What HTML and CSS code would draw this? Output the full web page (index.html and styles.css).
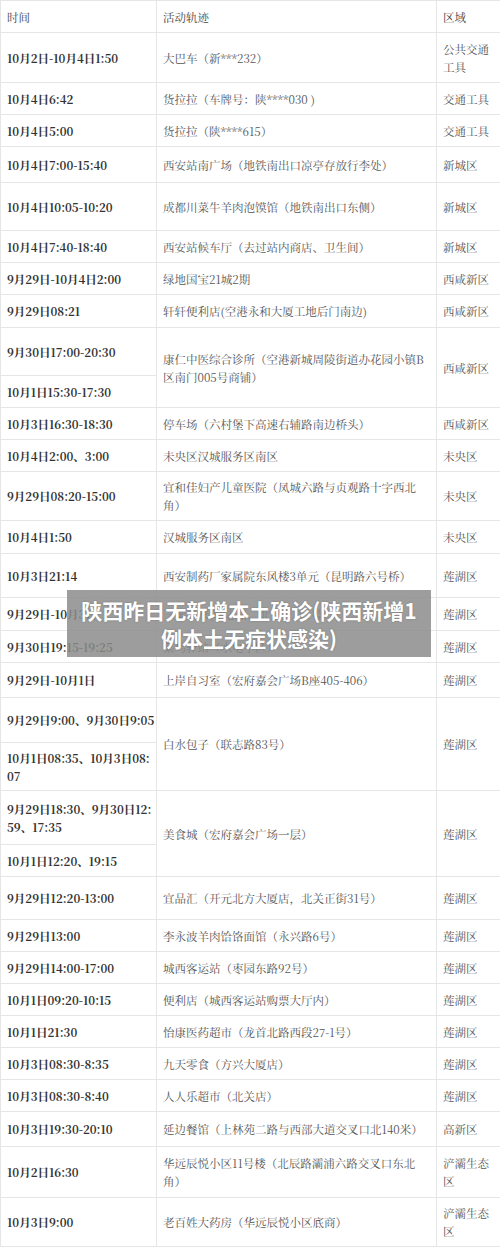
FILE: index.html
```html
<!DOCTYPE html>
<html lang="zh-CN">
<head>
<meta charset="utf-8">
<title>陕西昨日无新增本土确诊</title>
<link rel="stylesheet" href="styles.css">
</head>
<body>
<div class="page">
<table class="trail">
<colgroup><col class="c-time"><col class="c-place"><col class="c-area"></colgroup>
<tbody>
<tr class="head"><td>时间</td><td>活动轨迹</td><td>区域</td></tr>
<tr class="h50"><td class="t">10月2日-10月4日1:50</td><td>大巴车（新***232）</td><td>公共交通<br>工具</td></tr>
<tr><td class="t">10月4日6:42</td><td>货拉拉（车牌号：陕****030 )</td><td>交通工具</td></tr>
<tr><td class="t">10月4日5:00</td><td>货拉拉（陕****615）</td><td>交通工具</td></tr>
<tr class="h36"><td class="t">10月4日7:00-15:40</td><td>西安站南广场（地铁南出口凉亭存放行李处）</td><td>新城区</td></tr>
<tr class="h48"><td class="t">10月4日10:05-10:20</td><td>成都川菜牛羊肉泡馍馆（地铁南出口东侧）</td><td>新城区</td></tr>
<tr><td class="t">10月4日7:40-18:40</td><td>西安站候车厅（去过站内商店、卫生间）</td><td>新城区</td></tr>
<tr><td class="t">9月29日-10月4日2:00</td><td>绿地国宝21城2期</td><td>西咸新区</td></tr>
<tr class="h33"><td class="t">9月29日08:21</td><td>轩轩便利店(空港永和大厦工地后门南边)</td><td>西咸新区</td></tr>
<tr class="h48"><td class="t">9月30日17:00-20:30</td><td rowspan="2">康仁中医综合诊所（空港新城周陵街道办花园小镇B<br>区南门005号商铺）</td><td rowspan="2">西咸新区</td></tr>
<tr><td class="t">10月1日15:30-17:30</td></tr>
<tr><td class="t">10月3日16:30-18:30</td><td>停车场（六村堡下高速右辅路南边桥头）</td><td>西咸新区</td></tr>
<tr><td class="t">10月4日2:00、3:00</td><td>未央区汉城服务区南区</td><td>未央区</td></tr>
<tr class="h49"><td class="t">9月29日08:20-15:00</td><td>宜和佳妇产儿童医院（凤城六路与贞观路十字西北<br>角）</td><td>未央区</td></tr>
<tr class="h33"><td class="t">10月4日1:50</td><td>汉城服务区南区</td><td>未央区</td></tr>
<tr class="h44"><td class="t">10月3日21:14</td><td>西安制药厂家属院东风楼3单元（昆明路六号桥）</td><td>莲湖区</td></tr>
<tr class="h33"><td class="t">9月29日-10月3日</td><td>三秦人家(联志路，北关正街1号)</td><td>莲湖区</td></tr>
<tr><td class="t">9月30日19:15-19:25</td><td>菜鸟驿站（水电小区）</td><td>莲湖区</td></tr>
<tr class="h35"><td class="t">9月29日-10月1日</td><td>上岸自习室（宏府嘉会广场B座405-406）</td><td>莲湖区</td></tr>
<tr class="h45"><td class="t">9月29日9:00、9月30日9:05</td><td rowspan="2">白水包子（联志路83号）</td><td rowspan="2">莲湖区</td></tr>
<tr class="h48"><td class="t">10月1日08:35、10月3日08:<br>07</td></tr>
<tr class="h54"><td class="t">9月29日18:30、9月30日12:<br>59、17:35</td><td rowspan="2">美食城（宏府嘉会广场一层）</td><td rowspan="2">莲湖区</td></tr>
<tr><td class="t">10月1日12:20、19:15</td></tr>
<tr class="h43"><td class="t">9月29日12:20-13:00</td><td>宜品汇（开元北方大厦店，北关正街31号）</td><td>莲湖区</td></tr>
<tr><td class="t">9月29日13:00</td><td>李永波羊肉饸饹面馆（永兴路6号）</td><td>莲湖区</td></tr>
<tr><td class="t">9月29日14:00-17:00</td><td>城西客运站（枣园东路92号）</td><td>莲湖区</td></tr>
<tr><td class="t">10月1日09:20-10:15</td><td>便利店（城西客运站购票大厅内）</td><td>莲湖区</td></tr>
<tr><td class="t">10月1日21:30</td><td>怡康医药超市（龙首北路西段27-1号）</td><td>莲湖区</td></tr>
<tr><td class="t">10月3日08:30-8:35</td><td>九天零食（方兴大厦店）</td><td>莲湖区</td></tr>
<tr><td class="t">10月3日08:30-8:40</td><td>人人乐超市（北关店）</td><td>莲湖区</td></tr>
<tr class="h35"><td class="t">10月3日19:30-20:10</td><td>延边餐馆（上林苑二路与西部大道交叉口北140米）</td><td>高新区</td></tr>
<tr class="h51"><td class="t">10月2日16:30</td><td>华远辰悦小区11号楼（北辰路灞浦六路交叉口东北<br>角）</td><td>浐灞生态<br>区</td></tr>
<tr class="h49"><td class="t">10月3日9:00</td><td>老百姓大药房（华远辰悦小区底商）</td><td>浐灞生态<br>区</td></tr>
</tbody>
</table>
<div class="banner">陕西昨日无新增本土确诊(陕西新增1<br>例本土无症状感染)</div>
</div>
</body>
</html>
```

FILE: styles.css
```css
html, body {
  margin: 0;
  padding: 0;
  background: #ffffff;
}
.page {
  position: relative;
  width: 500px;
  overflow: hidden;
}
.trail {
  width: 500px;
  table-layout: fixed;
  border-collapse: collapse;
  font-family: "Noto Serif CJK SC", "Noto Sans CJK SC", serif;
  font-size: 11.5px;
  line-height: 18px;
  color: #555555;
}
.c-time { width: 156px; }
.c-place { width: 280px; }
.c-area { width: 64px; }
.trail tr { height: 32px; }
.trail td {
  border: 1px solid #e6e6e6;
  padding: 0 5px 0 6px;
  vertical-align: middle;
  white-space: nowrap;
}
.trail td:last-child { border-right: none; }
.trail .t {
  font-weight: bold;
  color: #333333;
}
.trail .head td { color: #444444; }
.trail tr.h33 { height: 33px; }
.trail tr.h35 { height: 35px; }
.trail tr.h36 { height: 36px; }
.trail tr.h43 { height: 43px; }
.trail tr.h44 { height: 44px; }
.trail tr.h45 { height: 45px; }
.trail tr.h48 { height: 48px; }
.trail tr.h49 { height: 49px; }
.trail tr.h50 { height: 50px; }
.trail tr.h51 { height: 51px; }
.trail tr.h54 { height: 54px; }
.banner {
  position: absolute;
  left: 67px;
  top: 590px;
  width: 364px;
  height: 67px;
  box-sizing: border-box;
  padding-top: 6px;
  background: rgba(140, 140, 140, 0.85);
  color: #ffffff;
  font-family: "Noto Sans CJK SC", sans-serif;
  font-weight: bold;
  font-size: 21px;
  line-height: 28px;
  text-align: center;
  text-shadow: 0 0 2px rgba(0, 0, 0, 0.25);
}
```
